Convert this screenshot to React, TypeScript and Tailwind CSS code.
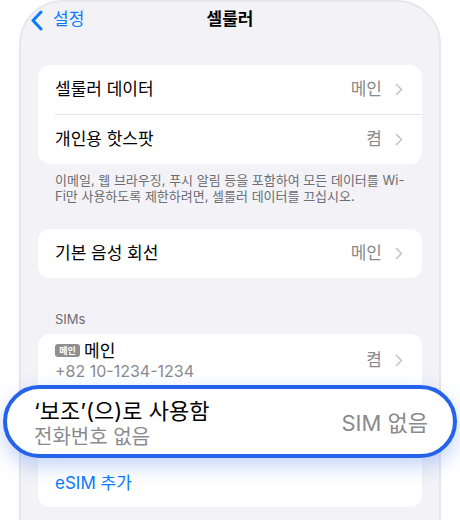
import * as React from 'react';

const font = { fontFamily: 'Inter, "Noto Sans CJK KR", sans-serif' };

function Chevron() {
  return (
    <svg width="8" height="13" viewBox="0 0 8 13" fill="none" className="shrink-0">
      <path d="M1.5 1.5L6.5 6.5L1.5 11.5" stroke="#c4c4c7" strokeWidth="1.6" strokeLinecap="round" strokeLinejoin="round" />
    </svg>
  );
}

function Row({ label, value }: { label: string; value: string }) {
  return (
    <div className="flex h-[49px] items-center justify-between pl-[17px] pr-[19px]">
      <span className="text-[17px] text-black">{label}</span>
      <div className="flex items-center gap-[13px]">
        <span className="text-[17px] text-[#8a8a8e]">{value}</span>
        <Chevron />
      </div>
    </div>
  );
}

export default function App() {
  return (
    <div className="h-[520px] w-[460px] overflow-hidden bg-white" style={font}>
      <div className="mx-[19px] h-[540px] rounded-t-[44px] border-2 border-[#e6e6eb] bg-[#f2f2f7] px-[17px]">
        {/* nav */}
        <div className="grid h-[36px] grid-cols-[1fr_auto_1fr] items-center">
          <div className="-ml-[8px] flex items-center gap-[9px] text-[#0a7aff]">
            <svg width="14" height="21" viewBox="0 0 14 21" fill="none">
              <path d="M11 2L3 10.5L11 19" stroke="#0a7aff" strokeWidth="3" strokeLinecap="round" strokeLinejoin="round" />
            </svg>
            <span className="text-[17px]">설정</span>
          </div>
          <span className="text-[17px] font-semibold text-black">셀룰러</span>
          <div />
        </div>

        {/* cellular data */}
        <div className="mt-[27px] rounded-[12px] bg-white">
          <Row label="셀룰러 데이터" value="메인" />
          <div className="ml-[17px] h-px bg-[#e3e3e6]" />
          <Row label="개인용 핫스팟" value="켬" />
        </div>
        <p className="px-[17px] pt-[8px] text-[13px] leading-[16px] text-[#6d6d72]">
          이메일, 웹 브라우징, 푸시 알림 등을 포함하여 모든 데이터를 Wi-
          <br />
          Fi만 사용하도록 제한하려면, 셀룰러 데이터를 끄십시오.
        </p>

        {/* voice line */}
        <div className="mt-[25px] rounded-[12px] bg-white">
          <Row label="기본 음성 회선" value="메인" />
        </div>

        {/* SIMs */}
        <p className="mt-[33px] px-[17px] text-[13px] leading-[16px] text-[#6d6d72]">SIMs</p>
        <div className="mt-[7px] rounded-[12px] bg-white">
          <div className="flex h-[51px] items-center justify-between pl-[17px] pr-[19px] pt-[2px]">
            <div className="flex flex-col">
              <div className="flex items-center gap-[4px]">
                <span className="flex h-[13px] w-[25px] items-center justify-center rounded-[3px] bg-[#8e8e93] text-[9px] font-bold leading-none text-white">메인</span>
                <span className="text-[17px] leading-[20px] text-black">메인</span>
              </div>
              <span className="text-[16px] leading-[20px] text-[#8a8a8e]">+82 10-1234-1234</span>
            </div>
            <div className="flex items-center gap-[13px]">
              <span className="text-[17px] text-[#8a8a8e]">켬</span>
              <Chevron />
            </div>
          </div>

          {/* highlighted secondary line */}
          <div className="relative z-10 -mx-[35px] flex h-[73px] items-center justify-between rounded-full border-4 border-[#2563eb] bg-white pb-[2px] pl-[27px] pr-[25px] pt-[6px] shadow-[0_8px_20px_rgba(37,99,235,0.28)]">
            <div className="flex flex-col">
              <span className="text-[22px] leading-[26px] text-black">‘보조’(으)로 사용함</span>
              <span className="text-[20px] leading-[26px] text-[#8a8a8e]">전화번호 없음</span>
            </div>
            <span className="text-[22px] text-[#8a8a8e]">SIM 없음</span>
          </div>

          <div className="flex h-[49px] items-center pl-[17px] pt-[3px]">
            <span className="text-[17px] text-[#0a7aff]">eSIM 추가</span>
          </div>
        </div>
      </div>
    </div>
  );
}
